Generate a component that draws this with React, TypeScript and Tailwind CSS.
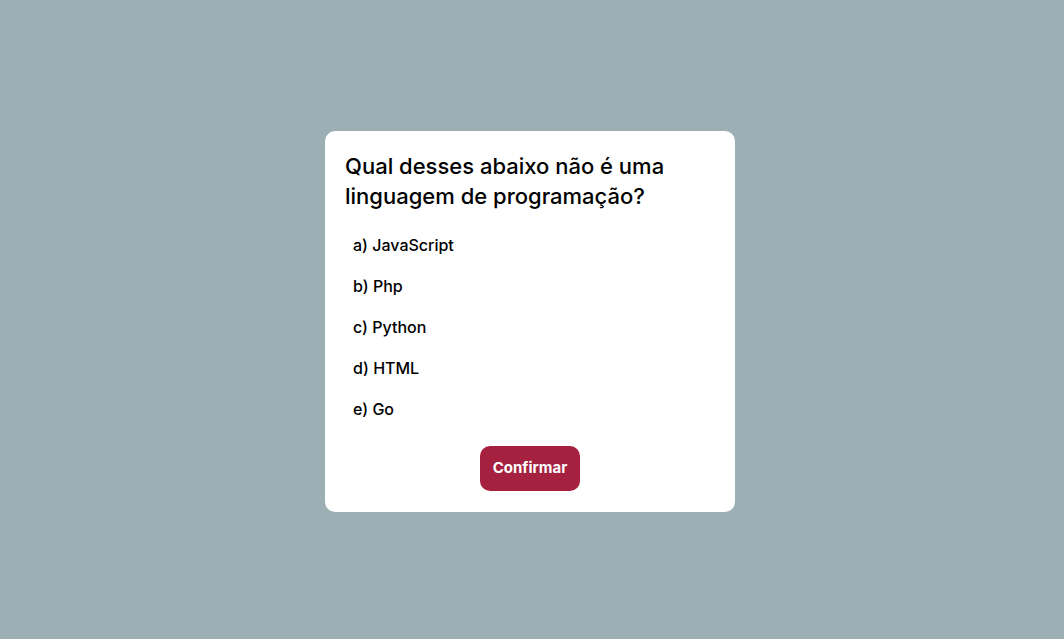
import { useState } from "react";

const options = [
  { id: "a", label: "JavaScript" },
  { id: "b", label: "Php" },
  { id: "c", label: "Python" },
  { id: "d", label: "HTML" },
  { id: "e", label: "Go" },
];

function Option({ id, label, onPick }: { id: string; label: string; onPick: () => void }) {
  return (
    <li
      onClick={onPick}
      className="h-[41px] flex items-center pl-2 text-[16px] font-medium text-black cursor-pointer"
    >
      {id}) {label}
    </li>
  );
}

export default function App() {
  const [picked, setPicked] = useState<string | null>(null);

  return (
    <div className="min-h-screen w-full bg-[#9cafb5] flex items-center justify-center font-['Inter',_'Open_Sans',_sans-serif]">
      <div className="w-[410px] bg-white rounded-[10px] px-5 pt-5 pb-[21px] mt-[4px] mr-[4px]">
        <h1 className="text-[22px] leading-[30px] font-medium text-black">
          Qual desses abaixo não é uma linguagem de programação?
        </h1>
        <ul className="mt-[13px]">
          {options.map((o) => (
            <Option key={o.id} id={o.id} label={o.label} onPick={() => setPicked(o.id)} />
          ))}
        </ul>
        <div className="flex justify-center mt-[17px]">
          <button
            data-picked={picked ?? ""}
            className="w-[100px] h-[45px] rounded-[10px] bg-[#a5213f] text-white text-[15px] font-bold"
          >
            Confirmar
          </button>
        </div>
      </div>
    </div>
  );
}
